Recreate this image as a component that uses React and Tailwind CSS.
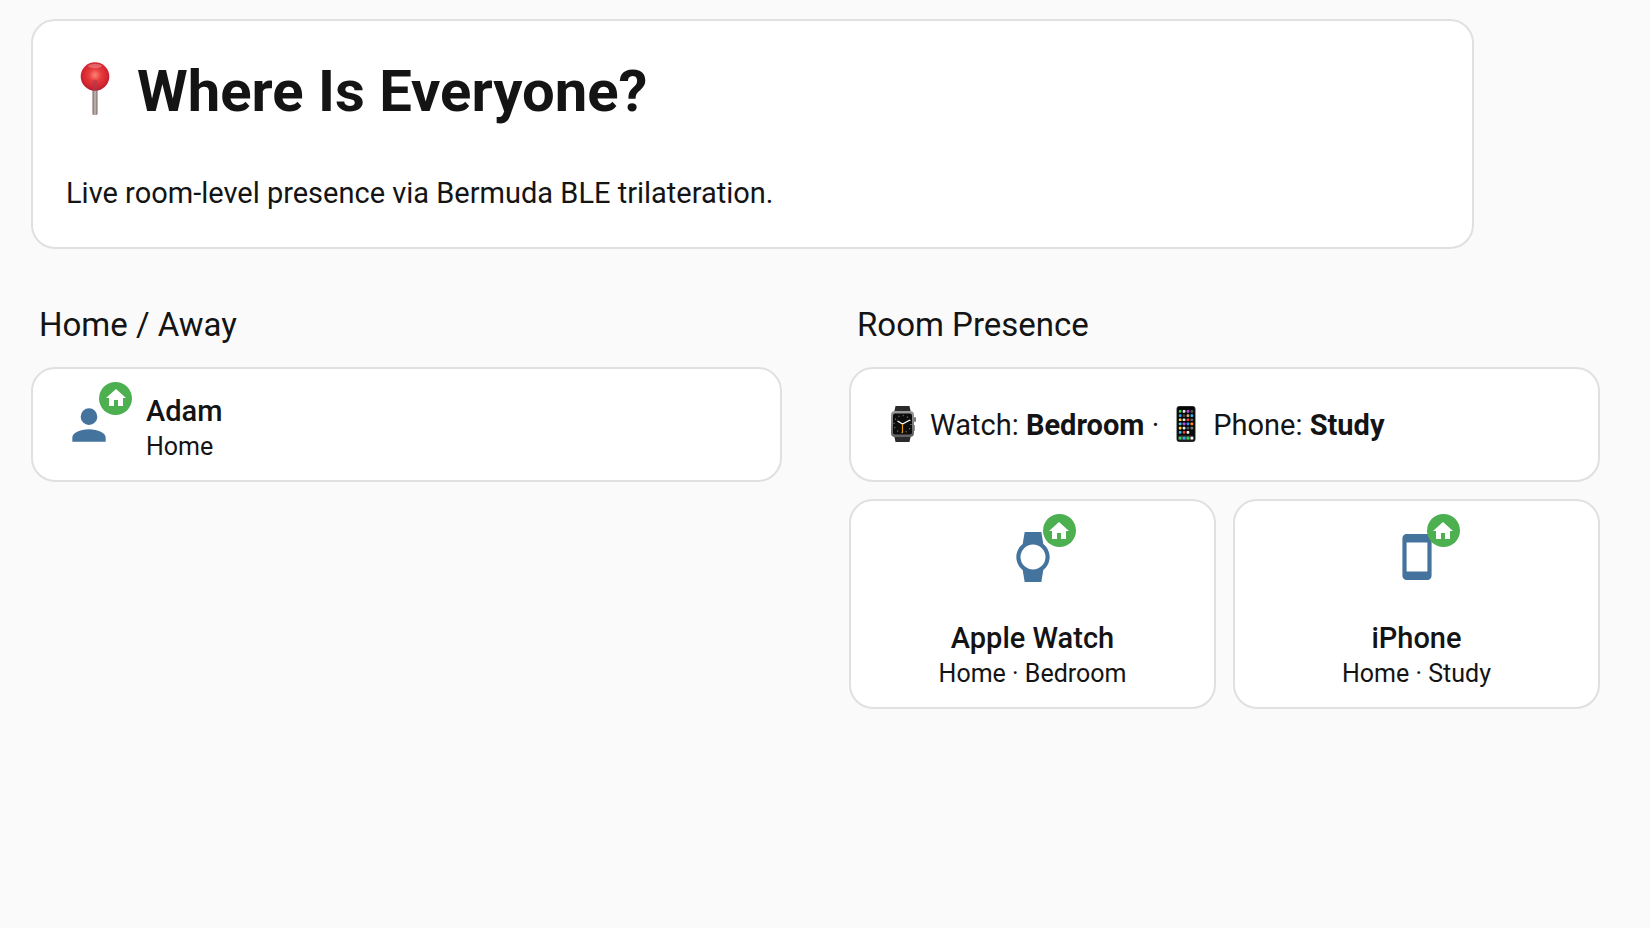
import React from 'react'

const icons = {
  account: 'M12,4A4,4 0 0,1 16,8A4,4 0 0,1 12,12A4,4 0 0,1 8,8A4,4 0 0,1 12,4M12,14C16.42,14 20,15.79 20,18V20H4V18C4,15.79 7.58,14 12,14Z',
  watch: 'M6,12A6,6 0 0,1 12,6A6,6 0 0,1 18,12A6,6 0 0,1 12,18A6,6 0 0,1 6,12M20,12C20,9.45 18.81,7.19 16.95,5.73L16,0H8L7.05,5.73C5.19,7.19 4,9.45 4,12C4,14.54 5.19,16.81 7.05,18.27L8,24H16L16.95,18.27C18.81,16.81 20,14.54 20,12Z',
  cellphone: 'M17,19H7V5H17M17,1H7C5.89,1 5,1.89 5,3V21A2,2 0 0,0 7,23H17A2,2 0 0,0 19,21V3C19,1.89 18.1,1 17,1Z',
  home: 'M10,20V14H14V20H19V12H22L12,3L2,12H5V20H10Z',
}

const Icon = ({ name, className }) => (
  <svg viewBox="0 0 24 24" fill="currentColor" aria-hidden="true" className={className}>
    <path d={icons[name]} />
  </svg>
)

const PinEmoji = () => (
  <svg viewBox="0 3 58 58" role="img" aria-label="Pin" className="h-[58px] w-[58px] shrink-0">
    <defs>
      <radialGradient id="pinHead" cx="0.5" cy="0.45" r="0.55">
        <stop offset="0" stopColor="#ff8478" />
        <stop offset="0.4" stopColor="#e63c3c" />
        <stop offset="0.8" stopColor="#d42430" />
        <stop offset="1" stopColor="#b01c34" />
      </radialGradient>
      <linearGradient id="pinNeedle" x1="0" x2="1">
        <stop offset="0" stopColor="#6f625c" />
        <stop offset="0.5" stopColor="#c9bdb5" />
        <stop offset="1" stopColor="#76665f" />
      </linearGradient>
    </defs>
    <rect x="26.5" y="27" width="5" height="29" rx="1.5" fill="url(#pinNeedle)" />
    <circle cx="29" cy="17.5" r="14.3" fill="url(#pinHead)" />
    <ellipse cx="29" cy="7" rx="7" ry="2.2" fill="#fff" opacity="0.25" />
    <path d="M26.5 22q2.5-2.5 5 0v9h-5z" fill="#a63a52" opacity="0.55" />
  </svg>
)

const WatchEmoji = () => (
  <svg viewBox="0 1 40 38" role="img" aria-label="Watch" className="h-[38px] w-10 shrink-0">
    <defs>
      <linearGradient id="watchCase" x1="0" y1="0" x2="0" y2="1">
        <stop offset="0" stopColor="#9a9a9a" />
        <stop offset="1" stopColor="#606060" />
      </linearGradient>
    </defs>
    <path d="M12.5 1h14l1.5 7h-17zM11 30h17l-1.5 7h-14z" fill="#2b2b2b" />
    <rect x="8" y="6" width="23" height="26" rx="4" fill="url(#watchCase)" />
    <rect x="31" y="12" width="2" height="5" rx="1" fill="#777" />
    <rect x="31" y="20" width="1" height="6" fill="#999" />
    <rect x="10" y="8.5" width="19" height="21" rx="2" fill="#0d0d0d" />
    <circle cx="19.5" cy="19" r="8.5" fill="none" stroke="#777" strokeWidth="1.4" strokeDasharray="1 3.45" />
    <path d="M14.5 16l5 3 7.5-4" fill="none" stroke="#fff" strokeWidth="1.3" />
    <path d="M19.5 19v9" stroke="#e8961a" strokeWidth="1.2" />
  </svg>
)

const appRows = [
  ['#34d158', '#e8e8e8', '#c04be0', '#555'],
  ['#3aa0ff', '#444', '#d8a878', '#2fb5f5'],
  ['#ffd23a', '#e8e8e8', '#f0443a', '#666'],
  ['#2fd0d8', '#c04be0', '#3a8bff', '#ff8a1f'],
  ['#ffd23a', '#e8e8e8', '#555', '#777'],
  ['#2fb5f5', '#f0443a', '#f5f5f5', '#111'],
]
const dockApps = ['#34d158', '#2fb5f5', '#34d158', '#f5f5f5']

const PhoneEmoji = () => (
  <svg viewBox="0 1 40 38" role="img" aria-label="Phone" className="h-[38px] w-10 shrink-0">
    <rect x="10.5" y="1" width="19" height="36" rx="3" fill="#333" />
    <rect x="11.3" y="1.8" width="17.4" height="34.4" rx="2.3" fill="#050505" />
    {appRows.map((row, y) =>
      row.map((color, x) => (
        <rect key={`${x}-${y}`} x={12.8 + x * 3.9} y={5 + y * 4.2} width="2.7" height="2.7" rx="0.7" fill={color} />
      ))
    )}
    <rect x="12" y="30.5" width="16" height="5" rx="1.5" fill="#3a3a3a" />
    {dockApps.map((color, x) => (
      <rect key={x} x={12.8 + x * 3.9} y="31.7" width="2.7" height="2.7" rx="0.7" fill={color} />
    ))}
  </svg>
)

const Tile = ({ icon, name, state, vertical }) => (
  <article
    className={
      vertical
        ? 'flex flex-col items-center gap-[22px] rounded-3xl border-2 border-[#e0e0e0] bg-white p-[19px] text-center'
        : 'flex min-h-[115px] items-center gap-5 rounded-3xl border-2 border-[#e0e0e0] bg-white px-[19px]'
    }
  >
    <div className="relative flex h-[74px] w-[74px] shrink-0 items-center justify-center">
      <Icon name={icon} className="h-[50px] w-[50px] text-[#44739e]" />
      <span className="absolute -right-1.5 -top-1.5 flex h-[33px] w-[33px] items-center justify-center rounded-full bg-[#4caf50]">
        <Icon name="home" className="h-6 w-6 text-white" />
      </span>
    </div>
    <div>
      <h3 className="text-[29px] font-medium leading-[44px]">{name}</h3>
      <p className="text-[25px] leading-7">{state}</p>
    </div>
  </article>
)

const App = () => {
  return (
    <main className="min-h-screen bg-[#fafafa] pb-8 pl-[31px] pr-[50px] pt-[19px] font-[Roboto,sans-serif] text-[#141414]">
      <header className="w-[92%] rounded-3xl border-2 border-[#e0e0e0] bg-white px-[33px] pb-[34px] pt-9">
        <h1 className="flex items-center gap-[13px] text-[58px] font-bold leading-[68px]">
          <PinEmoji />
          Where Is Everyone?
        </h1>
        <p className="mt-12 text-[29px] leading-10">Live room-level presence via Bermuda BLE trilateration.</p>
      </header>

      <div className="mt-14 grid grid-cols-2 items-start gap-[67px]">
        <section>
          <h2 className="mb-[22px] pl-2 text-[33px] leading-10">Home / Away</h2>
          <Tile icon="account" name="Adam" state="Home" />
        </section>

        <section>
          <h2 className="mb-[22px] pl-2 text-[33px] leading-10">Room Presence</h2>
          <div className="flex min-h-[115px] items-center gap-[7px] rounded-3xl border-2 border-[#e0e0e0] bg-white px-8 text-[29px] leading-10">
            <WatchEmoji />
            <p>Watch: <strong>Bedroom</strong> ·</p>
            <PhoneEmoji />
            <p>Phone: <strong>Study</strong></p>
          </div>
          <div className="mt-[17px] grid grid-cols-2 gap-[17px]">
            <Tile icon="watch" name="Apple Watch" state="Home · Bedroom" vertical />
            <Tile icon="cellphone" name="iPhone" state="Home · Study" vertical />
          </div>
        </section>
      </div>
    </main>
  )
}

export default App
